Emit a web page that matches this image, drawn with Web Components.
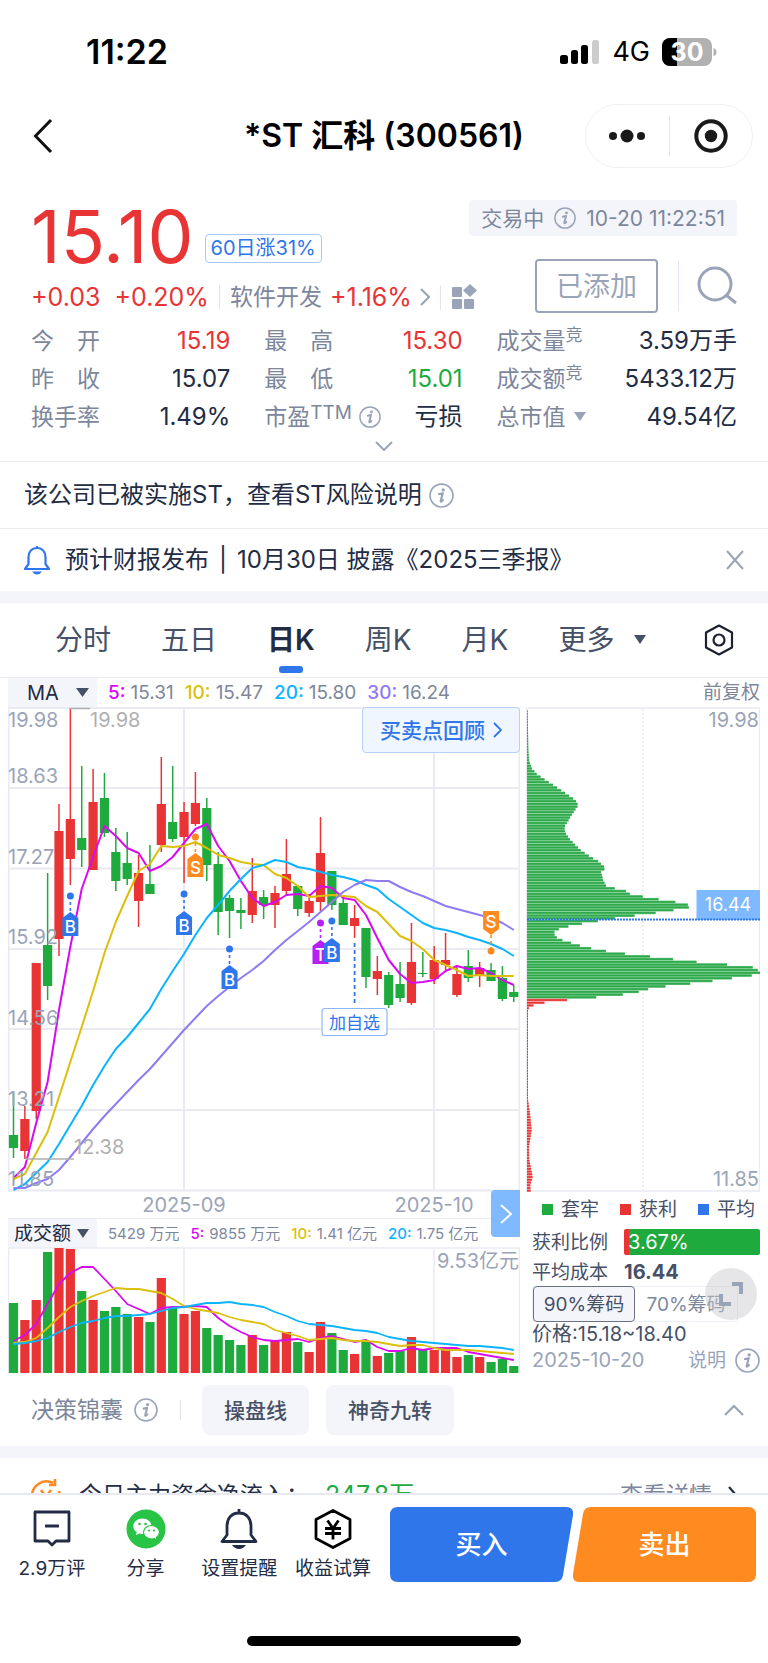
<!DOCTYPE html>
<html lang="zh-CN">
<head>
<meta charset="utf-8">
<meta name="viewport" content="width=device-width, initial-scale=1">
<title>*ST汇科 (300561)</title>
<style>
  html { background: #fff; }
  body {
    margin: 0;
    font-family: Inter, "Noto Sans CJK SC", sans-serif;
    font-size: 23px;
    line-height: 1;
    color: var(--ink);
    --ink: #222c44;
    --mid: #465066;
    --label: #7d879c;
    --mute: #9aa4b8;
    --red: #e83434;
    --green: #1eaa3c;
    --blue: #2f76ea;
    --orange: #ff8a1f;
    --band: #f4f5fa;
    --line: #ebecf1;
  }
</style>
</head>
<body>
<stock-page></stock-page>

<script>
const RESET = `
  *, *::before { box-sizing: border-box; }
  :host { display: block; }
  button, select { font: inherit; color: inherit; background: none; border: 0; padding: 0; margin: 0; cursor: pointer; }
  select { appearance: none; }
  a { color: inherit; text-decoration: none; }
  svg { display: block; flex: none; }
`;

function define(name, css, html) {
  const template = document.createElement('template');
  template.innerHTML = `<style>${RESET}${css}</style>${typeof html === 'function' ? html() : html}`;
  customElements.define(name, class extends HTMLElement {
    constructor() {
      super();
      this.attachShadow({ mode: 'open' }).append(template.content.cloneNode(true));
    }
  });
}

/* ---------- small shared parts ---------- */
define('info-icon', `
  :host { display: inline-block; width: 22px; height: 22px; flex: none; color: var(--mute); }
  svg { width: 100%; height: 100%; }
`, `<svg viewBox="0 0 24 24" fill="none" stroke="currentColor" stroke-width="1.6" role="img" aria-label="说明">
  <circle cx="12" cy="12" r="11"/>
  <circle cx="13.6" cy="6.6" r="1.6" fill="currentColor" stroke="none"/>
  <path d="M9.6 10.6l3.6-.8-2 7.4c-.2 1 .8.8 2.2-.8" stroke-width="2.1" stroke-linejoin="round" stroke-linecap="round"/>
</svg>`);

define('section-band', `:host { height: 12px; background: var(--band); }`, ``);

/* ---------- phone status bar ---------- */
define('status-bar', `
  :host { display: flex; align-items: center; justify-content: space-between; height: 96px; padding: 7px 51px 0 86px; color: #000; }
  .time { font-size: 34px; font-weight: 600; }
  .right { display: flex; align-items: center; gap: 12px; font-size: 27px; }
`, `
  <span class="time">11:22</span>
  <span class="right">
    <svg width="40" height="26" viewBox="0 0 40 26"><rect x="0" y="16" width="8" height="9" rx="2.5"/><rect x="11" y="11" width="7" height="14" rx="2.5"/><rect x="21" y="6" width="7" height="19" rx="2.5"/><rect x="32" y="1" width="7" height="24" rx="2.5" fill="#ccc"/></svg>
    <span>4G</span>
    <svg width="55" height="28" viewBox="0 0 55 28"><defs><clipPath id="b"><rect width="50" height="28" rx="8"/></clipPath></defs>
      <g clip-path="url(#b)"><rect width="50" height="28" fill="#b1b1b1"/><rect width="15" height="28" fill="#000"/></g>
      <path d="M51.500 10q3 1 3 4t-3 4z" fill="#b1b1b1"/>
      <text x="25" y="23" text-anchor="middle" font-size="25" font-weight="700" fill="#fff">30</text></svg>
  </span>`);

/* ---------- title bar ---------- */
define('title-bar', `
  :host { display: grid; grid-template-columns: 1fr auto 1fr; align-items: center; height: 80px; padding: 0 15px; color: #111; }
  h1 { margin: 0; font-size: 32px; font-weight: 600; white-space: nowrap; color: #000; }
  .back { justify-self: start; padding: 0 17px; }
  .capsule { justify-self: end; display: flex; align-items: center; width: 168px; height: 64px; border: 1px solid #efefef; border-radius: 32px; }
  .capsule button { flex: 1; display: grid; place-items: center; height: 100%; }
  i { width: 1px; height: 40px; background: #e8e8e8; }
`, `
  <button class="back" aria-label="返回"><svg width="22" height="36" viewBox="0 0 22 36" fill="none" stroke="#111" stroke-width="3"><path d="M19 2L3.500 18 19 34"/></svg></button>
  <h1>*ST 汇科 (300561)</h1>
  <div class="capsule">
    <button aria-label="更多"><svg width="38" height="16" viewBox="0 0 38 16" fill="#1a1a1a"><circle cx="5" cy="8" r="4"/><circle cx="19" cy="8" r="6.500"/><circle cx="33" cy="8" r="4"/></svg></button>
    <i></i>
    <button aria-label="关闭"><svg width="36" height="36" viewBox="0 0 36 36"><circle cx="18" cy="18" r="14.700" fill="none" stroke="#1a1a1a" stroke-width="4"/><circle cx="18" cy="18" r="6.200" fill="#1a1a1a"/></svg></button>
  </div>`);

/* ---------- one label/value pair ---------- */
define('quote-stat', `
  :host { display: flex; justify-content: space-between; align-items: center; height: 38px; color: var(--ink); white-space: nowrap; }
  :host([tone="up"]) { color: var(--red); }
  :host([tone="down"]) { color: var(--green); }
  .k { display: flex; align-items: center; color: var(--label); }
  .v { font-size: 24px; }
`, `<span class="k"><slot name="label"></slot></span><span class="v"><slot></slot></span>`);

/* ---------- quote header ---------- */
define('quote-header', `
  :host { padding: 24px 31px 0; border-bottom: 1px solid var(--line); }
  .top { display: grid; white-space: nowrap; }
  .now, .side { grid-area: 1 / 1; }
  .now { justify-self: start; }
  .price { display: flex; align-items: center; height: 72px; gap: 11px; color: var(--red); }
  .price b { font-size: 73px; font-weight: 400; }
  .tag { align-self: flex-end; margin-bottom: 9px; height: 29px; padding: 0 5px; border: 1px solid #a8c8fb; border-radius: 4px; font-size: 20px; line-height: 27px; color: var(--blue); }
  .change { display: flex; align-items: center; height: 50px; color: var(--red); font-size: 25px; }
  .change .gap { margin-left: 14px; }
  .change a { display: flex; align-items: center; gap: 8px; }
  .change em { font-style: normal; color: var(--label); font-size: 23px; }
  i { width: 1px; height: 25px; background: #e3e5ec; margin: 0 10px; }
  .side { justify-self: end; display: flex; flex-direction: column; align-items: flex-end; gap: 23px; }
  .state { display: flex; align-items: center; gap: 10px; height: 36px; padding: 0 12px; border-radius: 4px; background: var(--band); color: var(--label); font-size: 21px; }
  .act { display: flex; align-items: center; }
  .added { width: 123px; height: 54px; border: 2px solid var(--mute); border-radius: 4px; color: var(--mute); font-size: 27px; }
  .act i { height: 50px; margin: 0 18px 0 20px; }
  .stats { display: grid; grid-template-columns: 199fr 198fr 240fr; column-gap: 34px; }
  .stats sup { align-self: flex-start; font-size: 17px; line-height: 1; margin: -3px 0 0; }
  sup.ttm { font-size: 19px; }
  quote-stat info-icon { margin-left: 7px; }
  .k { display: flex; }
  .cap { align-items: center; gap: 7px; }
  select { color: var(--label); }
  .more { display: grid; place-items: center; width: 100%; height: 25px; padding-bottom: 5px; }
`, `
  <div class="top">
    <div class="now">
      <div class="price"><b>15.10</b><span class="tag">60日涨31%</span></div>
      <div class="change"><span>+0.03</span><span class="gap">+0.20%</span><i></i>
        <a href="#sector"><em>软件开发</em><span>+1.16%</span><svg width="10" height="18" viewBox="0 0 10 18" fill="none" stroke="#9aa4b8" stroke-width="2"><path d="M1 1l8 8-8 8"/></svg></a><i></i>
        <svg width="27" height="26" viewBox="0 0 27 26" fill="#9aa4b8"><rect x="1" y="3" width="10" height="10" rx="1"/><rect x="1" y="15" width="10" height="10" rx="1"/><rect x="13" y="15" width="10" height="10" rx="1"/><path d="M19 0l7 6.500-7 6.500-7-6.500z"/></svg></div>
    </div>
    <div class="side">
      <div class="state"><span>交易中</span><info-icon></info-icon><span>10-20 11:22:51</span></div>
      <div class="act"><button class="added">已添加</button><i></i>
        <button aria-label="搜索"><svg width="40" height="40" viewBox="0 0 40 40" fill="none" stroke="#9aa4b8" stroke-width="3"><circle cx="18" cy="18" r="16"/><path d="M29 29l10 8"/></svg></button></div>
    </div>
  </div>
  <div class="stats">
    <quote-stat tone="up"><span slot="label">今　开</span>15.19</quote-stat>
    <quote-stat tone="up"><span slot="label">最　高</span>15.30</quote-stat>
    <quote-stat><span slot="label" class="k">成交量<sup>竞</sup></span>3.59万手</quote-stat>
    <quote-stat><span slot="label">昨　收</span>15.07</quote-stat>
    <quote-stat tone="down"><span slot="label">最　低</span>15.01</quote-stat>
    <quote-stat><span slot="label" class="k">成交额<sup>竞</sup></span>5433.12万</quote-stat>
    <quote-stat><span slot="label">换手率</span>1.49%</quote-stat>
    <quote-stat><span slot="label" class="k">市盈<sup class="ttm">TTM</sup><info-icon></info-icon></span>亏损</quote-stat>
    <quote-stat><span slot="label" class="k cap"><select aria-label="市值口径"><option>总市值</option></select><svg width="14" height="10" viewBox="0 0 14 10" fill="#9aa4b8"><path d="M1 0h12l-6 9z"/></svg></span>49.54亿</quote-stat>
  </div>
  <button class="more" aria-label="展开"><svg width="18" height="10" viewBox="0 0 18 10" fill="none" stroke="#9aa4b8" stroke-width="2"><path d="M1 1l8 8 8-8"/></svg></button>`);

/* ---------- notices ---------- */
define('risk-notice', `
  :host { border-bottom: 1px solid var(--line); font-size: 24px; }
  a { display: flex; align-items: center; gap: 7px; height: 66px; padding: 0 24px; }
  info-icon { width: 25px; height: 25px; }
`, `<a href="#risk"><span><slot></slot></span><info-icon></info-icon></a>`);

define('report-notice', `
  :host { display: flex; align-items: center; height: 62px; padding: 0 24px; font-size: 24px; }
  p { display: flex; flex: 1; gap: 10px; margin: 0 0 0 15px; white-space: nowrap; }
`, `
  <svg width="26" height="30" viewBox="0 0 26 30" fill="none" stroke="#2f76ea" stroke-width="2.200" stroke-linejoin="round"><path d="M13 1v2M13 3c-5.500 0-8.500 4-8.500 9v7L1 24h24l-3.500-5v-7c0-5-3-9-8.500-9z"/><path d="M8 26.500h10q-2 3-5 3t-5-3z" fill="#2f76ea" stroke="none"/></svg>
  <p><span>预计财报发布</span><span>|</span><slot></slot></p>
  <button aria-label="关闭提醒"><svg width="18" height="20" viewBox="0 0 18 20" stroke="#9aa4b8" stroke-width="2"><path d="M1 1l16 18M17 1L1 19"/></svg></button>`);

/* ---------- period tabs ---------- */
define('period-tabs', `
  :host { display: flex; align-items: center; justify-content: space-between; height: 75px; padding: 0 34px 0 55px; border-bottom: 1px solid var(--line); font-size: 28px; color: var(--mid); }
  nav { display: flex; gap: 50px; }
  button { height: 74px; position: relative; white-space: nowrap; }
  .on { color: var(--ink); font-weight: 600; }
  .on::before { content: ""; position: absolute; left: 50%; bottom: 4px; width: 24px; height: 7px; margin-left: -12px; border-radius: 3px; background: var(--blue); }
  .drop { display: flex; align-items: center; gap: 18px; }
`, `
  <nav>
    <button>分时</button><button>五日</button><button class="on" aria-current="true">日K</button><button>周K</button><button>月K</button>
    <span class="drop"><select aria-label="更多周期"><option>更多</option></select><svg width="14" height="10" viewBox="0 0 14 10" fill="#465066"><path d="M1 0h12l-6 9z"/></svg></span>
  </nav>
  <button aria-label="设置"><svg width="30" height="32" viewBox="0 0 30 32" fill="none" stroke="#1d2230" stroke-width="2.200" stroke-linejoin="round"><path d="M15 1.500l13 7v15l-13 7-13-7v-15z"/><circle cx="15" cy="16" r="5.500"/></svg></button>`);

/* ---------- chart data ---------- */
const STEP = 11.37, X0 = 13.5;
const cx = i => X0 + STEP * i;
/* colour, high, body top, body bottom, low */
const CANDLES = [
  ['g',1093,1135,1148,1158],['r',1106,1119,1151,1159],['r',963,963,1111,1119],['g',873,945,986,1000],
  ['r',804,831,939,956],['r',708,819,859,885],['g',766,838,850,867],['r',769,802,870,870],
  ['g',773,798,833,837],['g',828,852,881,891],['g',832,863,879,885],['r',855,873,901,927],
  ['g',845,884,894,894],['r',757,804,845,852],['g',766,822,839,842],['r',802,812,837,883],
  ['r',772,803,824,826],['g',798,808,865,881],['g',852,864,912,935],['g',895,898,911,938],
  ['g',898,910,913,929],['r',858,891,915,923],['g',890,897,905,919],['r',886,893,905,928],
  ['r',839,874,891,895],['g',885,886,909,916],['r',894,901,913,917],['r',817,853,902,911],
  ['g',871,871,905,910],['g',897,903,925,925],['r',905,918,926,938],['g',928,928,977,988],
  ['r',956,971,979,995],['g',972,975,1005,1008],['g',962,984,998,1002],['r',923,962,1003,1005],
  ['g',952,973,974,977],['r',946,960,979,984],['r',933,960,965,970],['r',966,974,995,997],
  ['g',950,966,978,982],['r',962,968,976,987],['g',963,970,981,981],['g',966,978,999,1001],['g',985,992,997,1002]];
const MA = {
  '#d80bf0': [1178,1167,1123,1082,1010,947,889,857,826,836,848,853,871,866,857,843,829,824,846,861,881,898,906,902,895,894,896,886,888,898,900,915,938,960,974,983,982,980,971,966,969,968,973,980,985],
  '#dcbf0a': [1179,1174,1153,1132,1097,1062,1027,991,953,922,896,871,864,846,847,846,842,848,855,858,862,864,865,874,878,886,897,896,895,896,897,906,912,924,936,941,949,960,965,970,976,975,976,976,976],
  '#0bb4ff': [1190,1184,1173,1162,1144,1125,1106,1085,1066,1049,1037,1023,1009,989,971,954,935,918,905,891,879,868,865,860,862,867,869,872,875,877,880,885,889,899,907,915,923,928,930,933,937,940,944,949,956],
  '#8f7bf2': [1188,1188,1183,1179,1170,1157,1143,1129,1116,1104,1092,1080,1069,1056,1043,1030,1018,1006,996,987,978,970,961,950,940,931,922,912,902,892,885,880,881,881,887,892,896,901,906,909,912,915,918,923,930]
};
const VOLUME = [1303,1320,1300,1252,1248,1249,1291,1300,1311,1307,1314,1317,1322,1278,1308,1314,1311,1328,1335,1340,1345,1335,1345,1341,1332,1342,1352,1322,1333,1350,1354,1341,1356,1353,1351,1337,1350,1350,1349,1357,1355,1357,1362,1359,1366];
const VOL_MA = {
  '#d80bf0': [1341,1335,1324,1304,1284,1273,1267,1267,1279,1291,1304,1309,1314,1308,1307,1307,1306,1307,1318,1326,1332,1337,1340,1341,1340,1339,1342,1338,1336,1339,1342,1340,1347,1351,1351,1348,1350,1348,1348,1348,1352,1354,1356,1358,1360],
  '#dcbf0a': [1343,1342,1338,1328,1317,1307,1301,1296,1292,1288,1289,1289,1291,1293,1299,1306,1309,1311,1313,1317,1320,1322,1324,1330,1333,1336,1340,1339,1338,1340,1341,1341,1342,1344,1346,1345,1345,1348,1350,1350,1350,1351,1352,1353,1354],
  '#0bb4ff': [1344,1343,1341,1338,1332,1327,1323,1321,1318,1316,1316,1315,1314,1311,1308,1307,1305,1303,1303,1302,1304,1305,1307,1312,1316,1321,1324,1325,1326,1328,1330,1331,1333,1337,1339,1341,1342,1343,1344,1345,1346,1346,1347,1348,1350]
};
/* price level, number of chips */
const CHIPS = [[30,2],[150,4],[180,6],[205,14],[223,30],[240,55],[256,80],[272,104],[290,130],[300,145],[316,154],[330,144],[348,132],[365,122],[380,112],[397,114],[415,126],[432,142],[450,160],[465,182],[475,198],[482,212],[490,220],[499,231],[508,232],[515,222],[540,228],[557,237],[566,266],[574,300],[583,310],[591,355],[600,408],[608,458],[616,490],[624,484],[632,428],[641,370],[649,304],[657,250],[665,200],[674,149],[682,112],[690,88],[698,80],[707,84],[715,92],[724,116],[732,144],[741,172],[749,215],[758,264],[766,340],[774,410],[783,482],[791,562],[799,670],[807,688],[816,700],[823,700],[831,640],[840,577],[848,518],[857,432],[865,370],[873,347],[882,303],[890,228],[898,140],[906,62],[915,22],[923,6],[930,3],[1200,3],[1240,9],[1290,14],[1340,6],[1380,7],[1430,17],[1455,10],[1478,11]];
const INK = { r: '#e83434', g: '#1eaa3c' };
const lines = (set, w) => Object.entries(set).map(([c, ys]) =>
  `<polyline fill="none" stroke="${c}" stroke-width="${w}" stroke-linejoin="round" points="${ys.map((y, i) => `${cx(i).toFixed(1)},${y}`).join(' ')}"/>`).join('');
const label = (x, y, t, extra = '') => `<text x="${x}" y="${y}" ${extra}>${t}</text>`;

function marker(i, dot, top, letter, fill, down) {
  const x = cx(i), t = top, b = top + 24;
  const shape = down ? `M${x-8} ${t}h16v18l-8 6-8-6z` : `M${x} ${t}l8 6v18h-16v-18z`;
  const from = down ? b : dot, to = down ? dot : t;
  return `<circle cx="${x}" cy="${dot}" r="3.500" fill="${fill}"/><path d="M${x} ${from}V${to}" stroke="${fill}" stroke-width="1.600" stroke-dasharray="3 3"/>
    <path d="${shape}" fill="${fill}"/><text x="${x}" y="${down ? t + 17 : t + 21}" text-anchor="middle">${letter}</text>`;
}

define('candle-chart', `svg { width: 100%; height: auto; } text { font-size: 20px; fill: #9aa4b8; }
  .m text { fill: #fff; font-size: 17px; font-weight: 500; } .x text { fill: #b0b0b0; } text.own { fill: #2f76ea; font-size: 17px; }`, () => {
  let s = `<svg viewBox="8 707 512 485" role="img" aria-label="日K线"><g stroke="#e9eaf2" stroke-width="2">`;
  for (const y of [708,788,868.5,949,1029,1110,1190.5]) s += `<path d="M8 ${y}H520"/>`;
  for (const x of [8.5,184,434,519.5]) s += `<path d="M${x} 708V1191"/>`;
  s += `</g>`;
  CANDLES.forEach(([c, h, t, b, l], i) => {
    const x = cx(i);
    s += `<path d="M${x} ${h}V${l}" stroke="${INK[c]}" stroke-width="1.500"/><rect x="${x-4.6}" y="${t}" width="9.200" height="${Math.max(1, b-t)}" fill="${INK[c]}"/>`;
  });
  s += lines(MA, 2);
  s += `<path d="M26 1159H74M70 708.500H90" stroke="#b0b0b0" stroke-width="1.500"/>`;
  [[727,'19.98'],[783,'18.63'],[864,'17.27'],[944,'15.92'],[1025,'14.56'],[1106,'13.21'],[1186,'11.85']].forEach(([y, t]) => s += label(8, y, t));
  s += `<g class="x">${label(90, 727, '19.98')}${label(74, 1154, '12.38')}</g><g class="m">`;
  s += marker(5, 896, 912, 'B', '#2f76ea') + marker(15, 894, 911, 'B', '#2f76ea') + marker(19, 949, 965, 'B', '#2f76ea')
     + marker(16, 837, 853, 'S', '#ff8a1f') + marker(27, 923, 940, 'T', '#b620f5') + marker(28, 921, 938, 'B', '#2f76ea') + marker(42, 951, 911, 'S', '#ff8a1f', true);
  s += `</g><path d="M354.600 943V1003" stroke="#2f76ea" stroke-width="1.800" stroke-dasharray="4 3"/>
    <rect x="322" y="1008.500" width="65" height="27" rx="3" fill="#fff" stroke="#8db6f7" stroke-width="1.200"/>${label(354.5, 1029, '加自选', 'class="own" text-anchor="middle"')}</svg>`;
  return s;
});

define('volume-chart', `svg { width: 100%; height: auto; } text { font-size: 20px; fill: #9aa4b8; }`, () => {
  let s = `<svg viewBox="8 1247 512 127" role="img" aria-label="成交额"><path d="M8 1248H520M8.500 1248V1373M184 1248V1373M434 1248V1373M519.500 1248V1373" stroke="#e9eaf2" stroke-width="1.500"/>`;
  VOLUME.forEach((y, i) => s += `<rect x="${cx(i)-4.6}" y="${y}" width="9.200" height="${1373-y}" fill="${INK[CANDLES[i][0]]}"/>`);
  return s + lines(VOL_MA, 1.8) + label(519, 1268, '9.53亿元', 'text-anchor="end"') + `</svg>`;
});

define('chip-chart', `svg { width: 100%; height: auto; } text { font-size: 20px; fill: #9aa4b8; } .p { fill: #fff; font-size: 18px; }`, () => {
  let s = `<svg viewBox="526 707 234 485" role="img" aria-label="筹码分布"><g fill="none" stroke="#e9eaf2" stroke-width="1.500"><path d="M526 708H760M526 1191H760M759.500 708V1191M526.500 708V1191"/><path d="M643 709V1190" stroke-dasharray="2 2"/></g>`;
  for (let y = 34; y < 1478; y += 8.17) {
    const k = CHIPS.findIndex(p => p[0] >= y), a = CHIPS[Math.max(0, k-1)], b = CHIPS[k];
    const w = (a[0] === b[0] ? b[1] : a[1] + (b[1]-a[1]) * (y-a[0]) / (b[0]-a[0])) / 3, py = 700 + y/3;
    const red = y > 893, on = red ? '#e83434' : '#2fa84c', soft = red ? '#f29090' : '#62c47a';
    s += `<rect x="527" y="${py-1.36}" width="${w}" height="2.720" fill="${soft}"/><rect x="527" y="${py-.8}" width="${w}" height="1.600" fill="${on}"/>`;
  }
  return s + label(759, 727, '19.98', 'text-anchor="end"') + label(759, 1186, '11.85', 'text-anchor="end"')
    + `<rect x="696.500" y="890" width="63.500" height="30" fill="#7fb9ff"/>` + label(728, 911, '16.44', 'class="p" text-anchor="middle"')
    + `<path d="M527 919.500H760" stroke="#2f76ea" stroke-width="2" stroke-dasharray="2 1"/></svg>`;
});

/* ---------- chip distribution figures ---------- */
define('chip-panel', `
  :host { padding: 0 0 0 6px; color: var(--mid); font-size: 19px; }
  div { display: flex; align-items: center; white-space: nowrap; }
  .legend { height: 34px; justify-content: space-between; padding: 0 5px 0 10px; }
  .legend span { display: flex; align-items: center; gap: 8px; }
  .legend span::before { content: ""; width: 11px; height: 11px; background: var(--c); }
  .ratio { height: 32px; gap: 16px; }
  .bar { flex: 1; height: 26px; padding-left: 4px; border-radius: 2px; color: #fff; font-size: 20px; background: linear-gradient(90deg, var(--red) 4%, var(--green) 4%); }
  .cost { height: 28px; gap: 16px; }
  .cost b { font-size: 20px; font-weight: 700; }
  .seg { height: 36px; width: 206px; border-radius: 4px; border: 1px solid #eceef3; }
  .seg button { flex: 1; height: 36px; margin: -1px 0; color: var(--label); border: 1px solid transparent; border-radius: 4px; }
  .seg .on { border-color: #6a7283; background: var(--band); color: var(--mid); }
  .range { height: 24px; font-size: 20px; }
  .foot { height: 28px; justify-content: space-between; color: var(--mute); font-size: 20px; }
  .foot a { display: flex; align-items: center; gap: 9px; font-size: 19px; }
  info-icon { width: 25px; height: 25px; }
`, `
  <div class="legend"><span style="--c:var(--green)">套牢</span><span style="--c:var(--red)">获利</span><span style="--c:var(--blue)">平均</span></div>
  <div class="ratio"><span>获利比例</span><div class="bar">3.67%</div></div>
  <div class="cost"><span>平均成本</span><b>16.44</b></div>
  <div class="seg"><button class="on">90%筹码</button><button>70%筹码</button></div>
  <div class="range">价格:15.18~18.40</div>
  <div class="foot"><span>2025-10-20</span><a href="#about">说明<info-icon></info-icon></a></div>`);

/* ---------- chart area ---------- */
define('chart-area', `
  :host { padding: 0 8px; color: var(--label); }
  .pick { display: flex; align-items: center; justify-content: space-between; width: 89px; height: 100%; background: var(--band); color: var(--ink); font-size: 20px; }
  .ma { display: flex; align-items: center; height: 29px; font-size: 19px; gap: 11px; white-space: nowrap; }
  .ma .pick { padding: 0 8px 0 19px; }
  .ma > :last-child { margin-left: auto; }
  em { font-style: normal; margin-right: 5px; font-weight: 500; }
  .grid { display: grid; grid-template-columns: 512fr 234fr; column-gap: 6px; }
  .left, .right { position: relative; min-width: 0; }
  .review { position: absolute; top: 0; right: 0; display: flex; align-items: center; justify-content: center; gap: 8px; width: 158px; height: 46px; border: 1px solid #b5d0fa; border-radius: 4px; background: #eff6ff; color: var(--blue); font-size: 21px; font-weight: 500; white-space: nowrap; }
  .dates { display: grid; grid-template-columns: 352fr 148fr 12fr; height: 27px; align-items: center; text-align: center; font-size: 20px; color: var(--mute); border-bottom: 1px solid var(--line); white-space: nowrap; }
  .vh { display: flex; align-items: center; height: 28px; gap: 11px; font-size: 15px; white-space: nowrap; }
  .vh .pick { padding: 0 8px 0 6px; font-size: 19px; }
  .expand { position: absolute; right: 0; bottom: 137px; display: grid; place-items: center; width: 29px; height: 47px; border-radius: 4px 0 0 4px; background: #7fb9ff; }
  .full { position: absolute; right: 3px; bottom: 54px; display: grid; place-items: center; width: 52px; height: 52px; border-radius: 50%; background: rgba(200, 200, 205, .45); }
`, `
  <div class="ma"><span class="pick"><select aria-label="主图指标"><option>MA</option></select><svg width="13" height="9" viewBox="0 0 13 9" fill="#465066"><path d="M0 0h13L6.500 9z"/></svg></span>
    <span><em style="color:#d80bf0">5:</em>15.31</span><span><em style="color:#dcbf0a">10:</em>15.47</span><span><em style="color:#0bb4ff">20:</em>15.80</span><span><em style="color:#8f7bf2">30:</em>16.24</span><span>前复权</span></div>
  <div class="grid">
    <div class="left">
      <candle-chart></candle-chart>
      <button class="review">买卖点回顾<svg width="9" height="16" viewBox="0 0 9 16" fill="none" stroke="#2f76ea" stroke-width="1.800"><path d="M1 1l7 7-7 7"/></svg></button>
      <div class="dates"><span>2025-09</span><span>2025-10</span></div>
      <div class="vh"><span class="pick"><select aria-label="副图指标"><option>成交额</option></select><svg width="12" height="9" viewBox="0 0 12 9" fill="#465066"><path d="M0 0h12L6 9z"/></svg></span>
        <span>5429 万元</span><span><em style="color:#d80bf0">5:</em>9855 万元</span><span><em style="color:#dcbf0a">10:</em>1.41 亿元</span><span><em style="color:#0bb4ff">20:</em>1.75 亿元</span></div>
      <volume-chart></volume-chart>
      <button class="expand" aria-label="展开图表"><svg width="12" height="20" viewBox="0 0 12 20" fill="none" stroke="#fff" stroke-width="2"><path d="M1 1l10 9-10 9"/></svg></button>
    </div>
    <div class="right">
      <chip-chart></chip-chart>
      <chip-panel></chip-panel>
      <button class="full" aria-label="全屏"><svg width="26" height="26" viewBox="0 0 26 26" fill="none" stroke="#9aa4b8" stroke-width="4"><path d="M14 3h9v10M3 13v10h10"/></svg></button>
    </div>
  </div>`);

/* ---------- strategy row, fund flow preview ---------- */
define('strategy-row', `
  :host { display: flex; align-items: center; height: 72px; padding: 0 24px 0 31px; color: var(--label); }
  info-icon { width: 24px; height: 24px; margin-left: 11px; }
  i { width: 1px; height: 20px; margin: 0 21px 0 22px; background: #e3e5ec; }
  .chip { height: 50px; padding: 0 22px; margin-right: 17px; border-radius: 8px; background: var(--band); color: var(--mid); font-size: 21px; font-weight: 500; white-space: nowrap; }
  .fold { margin-left: auto; }
`, `<span>决策锦囊</span><info-icon></info-icon><i></i><button class="chip">操盘线</button><button class="chip">神奇九转</button>
  <button class="fold" aria-label="收起"><svg width="20" height="12" viewBox="0 0 20 12" fill="none" stroke="#9aa4b8" stroke-width="2.200"><path d="M1 11l9-9 9 9"/></svg></button>`);

define('fund-flow', `
  :host { height: 35px; overflow: hidden; }
  a { display: flex; align-items: center; height: 74px; padding: 0 31px; white-space: nowrap; }
  .t { margin-left: 18px; }
  .v { color: var(--green); font-size: 25px; margin-left: 16px; }
  .d { margin-left: auto; margin-right: 16px; color: var(--label); }
`, `<a href="#flow"><svg width="30" height="32" viewBox="0 0 30 32" fill="none" stroke="#ff8a1f" stroke-width="2.600"><path d="M1 17C1 6 13-1 22 4M24 0v6h-6M28 12q2 8-3 14M10 11l5 7 5-7M15 18v9"/></svg>
  <span class="t">今日主力资金净流入：</span><span class="v">247.8万</span><span class="d">查看详情</span>
  <svg width="9" height="18" viewBox="0 0 9 18" fill="none" stroke="#222c44" stroke-width="2.200"><path d="M1 1l7 8-7 8"/></svg></a>`);

/* ---------- bottom trade bar ---------- */
define('tool-item', `
  :host { flex: 1; min-width: 0; }
  button { display: flex; flex-direction: column; align-items: center; gap: 9px; width: 100%; color: var(--ink); font-size: 19px; line-height: 20px; white-space: nowrap; }
  span { height: 41px; }
`, `<button><span><slot name="icon"></slot></span><slot></slot></button>`);

define('trade-bar', `
  :host { display: flex; flex-direction: column; justify-content: space-between; height: 170px; border-top: 2px solid #e6e9f2; background: #fff; }
  .row { display: grid; grid-template-columns: 375fr 366fr; column-gap: 10px; padding: 12px 12px 0 5px; }
  .tools { display: flex; padding-top: 2px; }
  .trade { display: flex; }
  .trade button { flex: 1; position: relative; height: 75px; color: #fff; font-size: 26px; font-weight: 500; }
  .trade svg { position: absolute; inset: 0; width: 100%; height: 100%; }
  .trade span { position: relative; }
  .home { align-self: center; width: 274px; height: 10px; margin-bottom: 17px; border-radius: 5px; background: #000; }
`, `
  <div class="row">
    <div class="tools">
      <tool-item><svg slot="icon" width="40" height="40" viewBox="0 0 40 40" fill="none" stroke="#222c44" stroke-width="2.800" stroke-linejoin="round"><path d="M3 3h34v29H24l-4 4-4-4H3zM13 17h14"/></svg>2.9万评</tool-item>
      <tool-item><svg slot="icon" width="40" height="40" viewBox="0 0 40 40"><circle cx="20" cy="20" r="19.500" fill="#28c445"/>
        <path d="M16.500 9.500c-5 0-9.200 3.300-9.200 7.700 0 2.500 1.300 4.600 3.400 6l-.9 3 3.500-1.800c1 .3 2 .5 3.200.5 5 0 9-3.300 9-7.700s-4-7.700-9-7.700z" fill="#fff"/>
        <path d="M25.500 16.500c-4.500 0-8 3-8 6.800s3.500 6.700 8 6.700c1 0 1.900-.1 2.700-.4l3 1.700-.8-2.800c1.900-1.200 3.100-3 3.100-5.200 0-3.800-3.600-6.800-8-6.800z" fill="#fff" stroke="#28c445" stroke-width="1.200"/>
        <g fill="#28c445"><circle cx="13.500" cy="15" r="1.300"/><circle cx="19.500" cy="15" r="1.300"/><circle cx="23" cy="21.500" r="1.100"/><circle cx="28" cy="21.500" r="1.100"/></g></svg>分享</tool-item>
      <tool-item><svg slot="icon" width="40" height="40" viewBox="0 0 40 40" fill="none" stroke="#222c44" stroke-width="2.800" stroke-linejoin="round"><path d="M20 0v4M20 4c-8 0-12 6-12 13v9l-5 6.500h34L32 26v-9c0-7-4-13-12-13z"/><path d="M13 36h14q-3 4-7 4t-7-4z" fill="#222c44" stroke="none"/></svg>设置提醒</tool-item>
      <tool-item><svg slot="icon" width="40" height="40" viewBox="0 0 40 40" fill="none" stroke="#000" stroke-width="2.800" stroke-linejoin="round"><path d="M20 1.500l17 9v19l-17 9-17-9v-19zM14.500 11.500l5.500 8 5.500-8M12 19.500h16M12 24.500h16M20 19v11.500"/></svg>收益试算</tool-item>
    </div>
    <div class="trade">
      <button><svg viewBox="0 0 183 75" preserveAspectRatio="none"><path d="M8 0h168q8 0 7 8l-10 60q-1 7-8 7H8q-8 0-8-8V8q0-8 8-8z" fill="#2f76ea"/></svg><span>买入</span></button>
      <button><svg viewBox="0 0 183 75" preserveAspectRatio="none"><path d="M18 0h157q8 0 8 8v59q0 8-8 8H7q-8 0-7-8L10 7q1-7 8-7z" fill="#ff8a1f"/></svg><span>卖出</span></button>
    </div>
  </div>
  <div class="home"></div>`);

define('stock-page', ``, `
  <status-bar></status-bar>
  <title-bar></title-bar>
  <quote-header></quote-header>
  <risk-notice>该公司已被实施ST，查看ST风险说明</risk-notice>
  <report-notice>10月30日 披露《2025三季报》</report-notice>
  <section-band></section-band>
  <period-tabs></period-tabs>
  <chart-area></chart-area>
  <strategy-row></strategy-row>
  <section-band></section-band>
  <fund-flow></fund-flow>
  <trade-bar></trade-bar>`);
</script>
</body>
</html>
